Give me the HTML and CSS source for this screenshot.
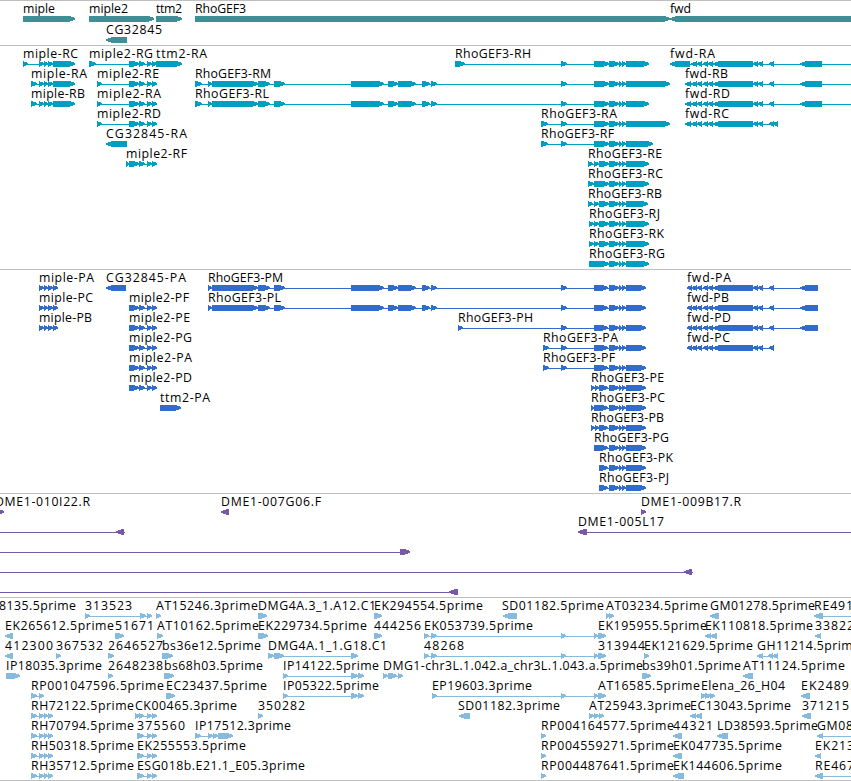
FILE: index.html
```html
<!DOCTYPE html>
<html lang="en">

<head>
    <meta charset="UTF-8">
    <meta name="viewport" content="width=device-width, initial-scale=1.0">
    <link rel="stylesheet" href="styles.css">
    <title>Genome tracks</title>
</head>

<body>
    <div class="browser">
        <div class="track genes"><svg id="genes"></svg></div>
        <div class="track transcripts"><svg id="transcripts"></svg></div>
        <div class="track proteins"><svg id="proteins"></svg></div>
        <div class="track clones"><svg id="clones"></svg></div>
        <div class="track ests"><svg id="ests"></svg></div>
    </div>
    <script src="tracks.js"></script>
</body>

</html>
```
FILE: styles.css
```css
body {
    margin: 0;
    background-color: white;
    overflow: hidden;
}

.browser {
    display: flex;
    flex-direction: column;
    width: 851px;
    height: 780px;
    border-bottom: 1px solid #bfbfbf;
}

.track {
    box-sizing: border-box;
    border-top: 1px solid #bfbfbf;
    overflow: hidden;
}

.track svg {
    display: block;
    width: 100%;
    height: 100%;
}

.genes {
    height: 45px;
    fill: #3f8f96;
}

.transcripts {
    height: 224px;
    fill: #009fc1;
}

.proteins {
    height: 224px;
    fill: #316ccc;
}

.clones {
    height: 104px;
    fill: #7659a8;
}

.ests {
    height: 183px;
    fill: #87bbdd;
}

.label {
    font-family: "Open Sans", "Noto Sans", sans-serif;
    font-size: 12.3px;
    fill: black;
}

.glyph {
    shape-rendering: crispEdges;
}
```
FILE: tracks.js
```js
var NS = "http://www.w3.org/2000/svg";

// exons shared by several isoforms
var mipleExons = [39, 44, 44, 48, 48, 53];
var miple2Exons = [129, 139, 139, 145, 147, 152, 152, 157];
var rhoMid = [258, 270, 274, 285, 351, 384, 388, 398, 398, 416, 422, 430, 431, 437, 561, 567];
var rhoTail = [609, 619, 619, 622, 622, 626];
var fwdExons = [691, 697, 697, 702, 703, 708, 708, 713, 713, 753, 753, 758, 758, 763, 769, 774];
var estTail = [561, 566, 594, 598, 598, 606];
var rh = [31, 37, 39, 44, 44, 48, 48, 53];

function rho(start, end) {
    return start.concat(rhoTail, [626, end]);
}

// row, label, label start, label end, strand, exons, line (optional)
var genes = [
    [0, "miple", 23, 55, 1, [23, 75]],
    [0, "miple2", 89, 128, 1, [89, 154]],
    [0, "ttm2", 156, 182, 1, [156, 182]],
    [0, "RhoGEF3", 195, 246, 1, [195, 670]],
    [0, "fwd", 670, 691, -1, [670, 860]],
    [1, "CG32845", 106, 162, -1, [106, 127]]
];

var transcripts = [
    [0, "miple-RC", 23, 78, 1, [23, 28].concat(mipleExons, [53, 75])],
    [1, "miple-RA", 31, 87, 1, [31, 37].concat(mipleExons, [53, 75])],
    [2, "miple-RB", 31, 85, 1, [31, 37].concat(mipleExons, [53, 75])],
    [0, "miple2-RG", 89, 153, 1, [89, 96].concat(miple2Exons)],
    [0, "ttm2-RA", 156, 207, 1, [156, 182]],
    [1, "miple2-RE", 97, 159, 1, [97, 102].concat(miple2Exons)],
    [2, "miple2-RA", 97, 161, 1, [97, 102].concat(miple2Exons)],
    [3, "miple2-RD", 97, 161, 1, [97, 102].concat(miple2Exons)],
    [4, "CG32845-RA", 106, 187, -1, [106, 127]],
    [5, "miple2-RF", 126, 187, 1, [126, 129].concat(miple2Exons)],
    [1, "RhoGEF3-RM", 195, 271, 1, rho([195, 202, 208, 212, 212, 258].concat(rhoMid, [594, 609]), 670)],
    [2, "RhoGEF3-RL", 195, 269, 1, rho([195, 202, 208, 212, 212, 258].concat(rhoMid, [594, 609]), 649)],
    [0, "RhoGEF3-RH", 455, 531, 1, rho([455, 465, 561, 567, 594, 609], 649)],
    [3, "RhoGEF3-RA", 541, 617, 1, rho([541, 548, 561, 567, 594, 609], 670)],
    [4, "RhoGEF3-RF", 541, 614, 1, rho([541, 548, 561, 567, 594, 609], 653)],
    [5, "RhoGEF3-RE", 588, 662, 1, rho([588, 593, 594, 599, 599, 609], 649)],
    [6, "RhoGEF3-RC", 588, 663, 1, rho([588, 594, 594, 609], 649)],
    [7, "RhoGEF3-RB", 588, 662, 1, rho([588, 593, 594, 599, 599, 609], 648)],
    [8, "RhoGEF3-RJ", 589, 660, 1, rho([589, 594, 594, 599, 599, 609], 649)],
    [9, "RhoGEF3-RK", 589, 664, 1, rho([589, 594, 594, 599, 599, 609], 649)],
    [10, "RhoGEF3-RG", 589, 665, 1, rho([589, 609], 649)],
    [0, "fwd-RA", 670, 715, -1, [670, 690].concat(fwdExons, [800, 822]), [670, 851]],
    [1, "fwd-RB", 685, 728, -1, [685, 691].concat(fwdExons, [800, 822]), [685, 851]],
    [2, "fwd-RD", 685, 730, -1, [685, 691].concat(fwdExons, [800, 822]), [685, 851]],
    [3, "fwd-RC", 685, 729, -1, [685, 691].concat(fwdExons, [773, 778])]
];

var proteins = [
    [0, "miple-PA", 39, 94, 1, mipleExons.concat([53, 58])],
    [1, "miple-PC", 39, 93, 1, mipleExons.concat([53, 58])],
    [2, "miple-PB", 39, 92, 1, mipleExons.concat([53, 58])],
    [0, "CG32845-PA", 106, 186, -1, [106, 126]],
    [1, "miple2-PF", 129, 189, 1, miple2Exons],
    [2, "miple2-PE", 129, 190, 1, miple2Exons],
    [3, "miple2-PG", 129, 192, 1, miple2Exons],
    [4, "miple2-PA", 129, 192, 1, miple2Exons],
    [5, "miple2-PD", 129, 192, 1, miple2Exons],
    [6, "ttm2-PA", 160, 210, 1, [160, 181]],
    [0, "RhoGEF3-PM", 208, 283, 1, rho([208, 212, 212, 258].concat(rhoMid, [594, 608]), 646)],
    [1, "RhoGEF3-PL", 208, 281, 1, rho([208, 212, 212, 258].concat(rhoMid, [594, 608]), 646)],
    [2, "RhoGEF3-PH", 458, 533, 1, rho([458, 463, 561, 567, 594, 608], 646)],
    [3, "RhoGEF3-PA", 543, 618, 1, rho([543, 549, 561, 567, 594, 608], 646)],
    [4, "RhoGEF3-PF", 543, 615, 1, rho([543, 549, 561, 567, 594, 608], 646)],
    [5, "RhoGEF3-PE", 591, 664, 1, rho([591, 595, 595, 599, 599, 608], 646)],
    [6, "RhoGEF3-PC", 591, 665, 1, rho([591, 594, 594, 608], 646)],
    [7, "RhoGEF3-PB", 591, 664, 1, rho([591, 595, 595, 599, 599, 608], 646)],
    [8, "RhoGEF3-PG", 594, 669, 1, rho([594, 608], 646)],
    [9, "RhoGEF3-PK", 599, 673, 1, rho([599, 608], 646)],
    [10, "RhoGEF3-PJ", 599, 669, 1, rho([599, 608], 646)],
    [0, "fwd-PA", 687, 731, -1, [687, 692].concat(fwdExons, [800, 818])],
    [1, "fwd-PB", 687, 729, -1, [687, 692].concat(fwdExons, [800, 818])],
    [2, "fwd-PD", 687, 731, -1, [687, 692].concat(fwdExons, [800, 818])],
    [3, "fwd-PC", 687, 730, -1, [687, 692].concat(fwdExons)]
];

var clones = [
    [0, "DME1-010I22.R", -5, 90, 1, [-4, 4]],
    [0, "DME1-007G06.F", 221, 321, -1, [221, 229]],
    [0, "DME1-009B17.R", 641, 741, 1, [641, 646]],
    [1, "", 0, 0, -1, [116, 124], [0, 125]],
    [1, "DME1-005L17", 578, 664, -1, [578, 587], [578, 851]],
    [2, "", 0, 0, 1, [400, 410], [0, 410]],
    [3, "", 0, 0, -1, [684, 692], [0, 693]],
    [4, "", 0, 0, -1, [449, 458], [0, 458]]
];

var ests = [
    [0, "8135.5prime", -1, 76, 1, []],
    [0, "313523", 85, 132, 1, [85, 90, 140, 146, 147, 152]],
    [0, "AT15246.3prime", 156, 258, 1, [156, 161]],
    [0, "DMG4A.3_1.A12.C1", 258, 376, 1, [258, 267]],
    [0, "EK294554.5prime", 374, 483, 1, [374, 382]],
    [0, "SD01182.5prime", 502, 604, -1, [503, 517]],
    [0, "AT03234.5prime", 606, 708, 1, [606, 610, 609, 614]],
    [0, "GM01278.5prime", 710, 815, -1, [710, 719]],
    [0, "RE491", 814, 853, -1, [814, 823], [814, 851]],
    [1, "EK265612.5prime", 5, 114, -1, [5, 13]],
    [1, "51671", 115, 154, 1, [115, 124]],
    [1, "AT10162.5prime", 157, 259, 1, [157, 163]],
    [1, "EK229734.5prime", 258, 367, 1, [258, 268]],
    [1, "444256", 374, 421, 1, [374, 382]],
    [1, "EK053739.5prime", 424, 533, 1, [424, 429, 431, 437].concat(estTail)],
    [1, "EK195955.5prime", 598, 707, 1, []],
    [1, "EK110818.5prime", 705, 813, -1, [705, 711, 710, 717]],
    [1, "33822", 815, 854, -1, [815, 821]],
    [2, "412300", 5, 53, -1, [5, 13]],
    [2, "367532", 56, 103, 1, [56, 61]],
    [2, "2646527", 108, 163, 1, [108, 114]],
    [2, "bs36e12.5prime", 162, 261, 1, [162, 173]],
    [2, "DMG4A.1_1.G18.C1", 268, 387, 1, [268, 274, 274, 284, 351, 358]],
    [2, "48268", 424, 464, 1, [424, 429, 431, 437].concat(estTail)],
    [2, "313944", 598, 645, 1, []],
    [2, "EK121629.5prime", 644, 753, 1, [644, 649]],
    [2, "GH11214.5prime", 757, 860, -1, [757, 763, 768, 773, 772, 778]],
    [3, "IP18035.3prime", 6, 102, 1, [6, 20]],
    [3, "2648238", 108, 163, 1, [108, 113]],
    [3, "bs68h03.5prime", 164, 263, 1, [164, 174]],
    [3, "IP14122.5prime", 283, 379, 1, [283, 288, 351, 358, 358, 364]],
    [3, "DMG1-chr3L.1.042.a_chr3L.1.043.a.5prime", 383, 643, 1, [383, 388, 388, 397, 398, 403]],
    [3, "bs39h01.5prime", 642, 741, 1, [642, 651]],
    [3, "AT11124.5prime", 743, 845, -1, [743, 753]],
    [4, "RP001047596.5prime", 31, 164, 1, [31, 37, 39, 44]],
    [4, "EC23437.5prime", 166, 267, 1, [166, 175]],
    [4, "IP05322.5prime", 283, 379, 1, [283, 288, 351, 358, 358, 364]],
    [4, "EP19603.3prime", 432, 532, 1, [432, 437].concat(estTail)],
    [4, "AT16585.5prime", 598, 700, 1, []],
    [4, "Elena_26_H04", 701, 785, 1, [701, 706, 705, 711, 710, 715]],
    [4, "EK24895", 801, 857, -1, [801, 810]],
    [5, "RH72122.5prime", 31, 134, 1, rh],
    [5, "CK00465.3prime", 135, 237, 1, [135, 140, 139, 144, 147, 152, 152, 157]],
    [5, "350282", 258, 305, 1, [258, 263]],
    [5, "SD01182.3prime", 458, 560, -1, [459, 470]],
    [5, "AT25943.3prime", 589, 691, 1, [589, 594, 594, 599, 599, 604]],
    [5, "EC13043.5prime", 690, 791, -1, [690, 696, 695, 702]],
    [5, "371215", 802, 849, -1, [802, 811]],
    [6, "RH70794.5prime", 31, 134, 1, rh],
    [6, "375560", 137, 185, 1, [137, 144, 147, 152, 152, 157]],
    [6, "IP17512.3prime", 195, 291, 1, [195, 201, 208, 213, 213, 218, 218, 233]],
    [6, "RP004164577.5prime", 541, 674, 1, [541, 546]],
    [6, "44321", 673, 713, -1, [673, 682]],
    [6, "LD38593.5prime", 717, 818, -1, [717, 728]],
    [6, "GM08", 817, 853, -1, [817, 823], [817, 851]],
    [7, "RH50318.5prime", 31, 134, 1, rh],
    [7, "EK255553.5prime", 137, 246, 1, [137, 144, 147, 152, 152, 157]],
    [7, "RP004559271.5prime", 541, 674, 1, [541, 546]],
    [7, "EK047735.5prime", 673, 782, -1, [673, 682]],
    [7, "EK213", 815, 854, -1, [815, 821]],
    [8, "RH35712.5prime", 31, 134, 1, rh],
    [8, "ESG018b.E21.1_E05.3prime", 137, 305, 1, [137, 144, 147, 152, 152, 157]],
    [8, "RP004487641.5prime", 541, 674, 1, [541, 546]],
    [8, "EK144606.5prime", 673, 782, -1, [673, 684]],
    [8, "RE467", 815, 854, -1, [815, 823], [815, 851]]
];

function add(svg, tag, attrs) {
    var el = document.createElementNS(NS, tag);
    for (var key in attrs) {
        el.setAttribute(key, attrs[key]);
    }
    svg.appendChild(el);
    return el;
}

// block with a pointed end in the direction of the strand
function arrow(a, b, y, strand) {
    var head = Math.min(6, b - a);
    if (strand < 0) {
        var t = a;
        a = b;
        b = t;
        head = -head;
    }
    return "M" + a + " " + y + "H" + (b - head) + "L" + b + " " + (y + 2) +
        "V" + (y + 3.5) + "L" + (b - head) + " " + (y + 6) + "H" + a + "Z";
}

function drawTrack(id, rows, pitch) {
    var svg = document.getElementById(id);
    rows.forEach(function (f) {
        var y = f[0] * pitch + 15;
        var exons = f[5];
        if (exons.length) {
            var line = f[6] || [exons[0], exons[exons.length - 1]];
            // a single block has no intron line
            if (f[6] || exons.length > 2) {
                add(svg, "rect", { "class": "glyph", x: line[0], y: y + 3, width: line[1] - line[0], height: 1 });
            }
            var d = "";
            for (var i = 0; i < exons.length; i += 2) {
                d += arrow(exons[i], exons[i + 1], y, f[4]);
            }
            add(svg, "path", { "class": "glyph", d: d });
        }
        if (f[1]) {
            var text = add(svg, "text", { "class": "label", x: f[2], y: y - 3, textLength: f[3] - f[2] });
            text.textContent = f[1];
        }
    });
}

drawTrack("genes", genes, 21);
drawTrack("transcripts", transcripts, 20);
drawTrack("proteins", proteins, 20);
drawTrack("clones", clones, 20);
drawTrack("ests", ests, 20);
```
